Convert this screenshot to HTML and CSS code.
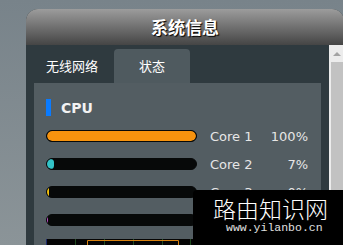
FILE: index.html
```html
<!DOCTYPE html>
<html lang="zh-CN">
<head>
<meta charset="utf-8">
<link rel="stylesheet" href="styles.css">
</head>
<body>
<div class="window">
  <div class="titlebar">系统信息</div>
  <div class="body">
    <div class="main">
      <div class="tabs">
        <div class="tab">无线网络</div>
        <div class="tab active">状态</div>
      </div>
      <div class="panel">
        <div class="section-head"><span class="mark"></span><span class="section-title">CPU</span></div>
        <div class="row">
          <div class="bar"><div class="fill orange" style="width:100%"></div></div>
          <span class="label">Core 1</span><span class="pct">100%</span>
        </div>
        <div class="row">
          <div class="bar"><div class="fill cyan" style="width:7px"></div></div>
          <span class="label">Core 2</span><span class="pct">7%</span>
        </div>
        <div class="row">
          <div class="bar"><div class="fill yellow" style="width:2px"></div></div>
          <span class="label">Core 3</span><span class="pct">0%</span>
        </div>
        <div class="row">
          <div class="bar"><div class="fill magenta" style="width:1px"></div></div>
          <span class="label">Core 4</span><span class="pct">0%</span>
        </div>
        <svg class="chart" width="262" height="40" viewBox="0 0 262 40">
          <rect x="0" y="0" width="262" height="40" fill="#050505"/>
          <line x1="0.5" y1="0" x2="0.5" y2="40" stroke="#1d2a6a" stroke-width="1"/>
          <line x1="29.5" y1="0" x2="29.5" y2="40" stroke="#1f4a1f" stroke-width="1"/>
          <line x1="58.5" y1="0" x2="58.5" y2="40" stroke="#1f4a1f" stroke-width="1"/>
          <line x1="87.5" y1="0" x2="87.5" y2="40" stroke="#1f4a1f" stroke-width="1"/>
          <line x1="116.5" y1="0" x2="116.5" y2="40" stroke="#1f4a1f" stroke-width="1"/>
          <line x1="144.5" y1="0" x2="144.5" y2="40" stroke="#1f4a1f" stroke-width="1"/>
          <polyline points="41.5,40 41.5,1.5 132.5,1.5 132.5,40" fill="none" stroke="#d9820f" stroke-width="1"/>
        </svg>
      </div>
    </div>
    <div class="scrollbar">
      <div class="arrow"></div>
      <div class="thumb"></div>
    </div>
  </div>
</div>
<div class="watermark">
  <div class="wm-title">路由知识网</div>
  <div class="wm-url">www.yilanbo.cn</div>
</div>
</body>
</html>
```
FILE: styles.css
```css
html, body {
  margin: 0;
  padding: 0;
}
body {
  width: 343px;
  height: 245px;
  overflow: hidden;
  position: relative;
  background: linear-gradient(#78838a, #8b9498);
  font-family: "DejaVu Sans", "Noto Sans CJK SC", sans-serif;
}
.window {
  margin: 9px 0 0 26px;
  width: 318px;
  border-radius: 12px 12px 0 0;
  overflow: hidden;
  background: #2f3a3f;
}
.titlebar {
  height: 36px;
  line-height: 36px;
  text-align: center;
  color: #fff;
  font-family: "Noto Sans CJK SC", sans-serif;
  font-weight: bold;
  font-size: 17px;
  text-shadow: 1px 1px 1px #000;
  background: linear-gradient(#9c9c9c, #454545);
}
.body {
  display: flex;
  height: 200px;
}
.main {
  width: 303px;
}
.tabs {
  display: flex;
  gap: 4px;
  padding: 4px 0 0 8px;
  height: 34px;
}
.tab {
  width: 76px;
  height: 34px;
  line-height: 34px;
  text-align: center;
  color: #fff;
  font-family: "Noto Sans CJK SC", sans-serif;
  font-size: 13px;
}
.tab.active {
  background: #4f5a5f;
  border-radius: 4px 4px 0 0;
}
.panel {
  margin: 0 8px;
  background: #535d62;
  height: 170px;
  padding: 16px 0 0 12px;
  box-sizing: border-box;
}
.section-head {
  display: flex;
  align-items: center;
  gap: 10px;
  height: 17px;
  margin-bottom: 13px;
}
.mark {
  width: 5px;
  height: 17px;
  background: #0a7bff;
}
.section-title {
  color: #f2f2f2;
  font-weight: bold;
  font-size: 14px;
  font-family: "DejaVu Sans", sans-serif;
}
.row {
  display: flex;
  align-items: center;
  height: 14px;
  margin-bottom: 14px;
  color: #e6e6e6;
  font-size: 13px;
}
.bar {
  width: 151px;
  height: 12px;
  background: #070909;
  border-radius: 6px;
  box-sizing: border-box;
  border: 1px solid #070909;
  overflow: hidden;
  margin-right: 13px;
}
.fill {
  height: 100%;
  border-radius: 5px;
}
.orange { background: #f7930e; }
.cyan { background: #33c4c8; }
.yellow { background: #f4c20d; border-radius: 0; }
.magenta { background: #c94fd0; border-radius: 0; }
.label {
  width: 50px;
}
.pct {
  width: 48px;
  text-align: right;
}
.chart {
  display: block;
  margin-top: -2px;
}
.scrollbar {
  width: 15px;
  background: #ececec;
  position: relative;
}
.arrow {
  width: 0;
  height: 0;
  margin: 7px 0 0 4px;
  border-left: 4px solid transparent;
  border-right: 4px solid transparent;
  border-bottom: 4px solid #a3a3a3;
}
.thumb {
  margin: 6px 0 0 2px;
  height: 200px;
  background: #c2c2c2;
}
.watermark {
  position: absolute;
  left: 193px;
  top: 190px;
  width: 150px;
  height: 55px;
  background: #000;
  border-top-left-radius: 4px;
  color: #fff;
}
.wm-title {
  font-family: "Noto Sans CJK SC", sans-serif;
  font-weight: 300;
  font-size: 23px;
  line-height: 26px;
  padding: 5px 0 0 20px;
}
.wm-url {
  font-family: "Liberation Mono", monospace;
  font-size: 11.5px;
  color: #e0e0e0;
  padding-left: 33px;
  line-height: 14px;
}
```
